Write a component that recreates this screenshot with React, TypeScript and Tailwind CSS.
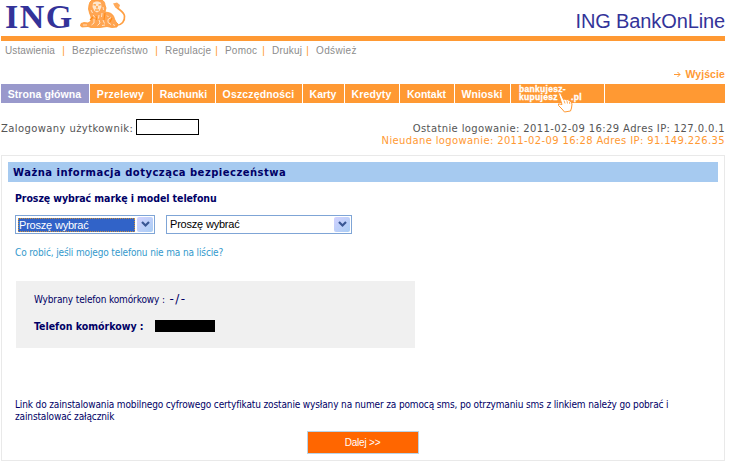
import React from "react";

const topLinks = [
  { label: "Ustawienia", box: "w-[67px] tracking-[0.1px]" },
  { label: "Bezpieczeństwo", box: "w-[93px] tracking-[0.27px]" },
  { label: "Regulacje", box: "w-[60px]" },
  { label: "Pomoc", box: "w-[47px]" },
  { label: "Drukuj", box: "w-[44px]" },
  { label: "Odśwież", box: "w-[50px] tracking-[0.35px]" },
];

const tabs = [
  { label: "Strona główna", box: "w-[88px] bg-[#9999cc] tracking-[0.1px]" },
  { label: "Przelewy", box: "w-[62px] bg-[#ff9933] tracking-[0.3px]" },
  { label: "Rachunki", box: "w-[62px] bg-[#ff9933]" },
  { label: "Oszczędności", box: "w-[86px] bg-[#ff9933] tracking-[0.15px]" },
  { label: "Karty", box: "w-[41px] bg-[#ff9933]" },
  { label: "Kredyty", box: "w-[54px] bg-[#ff9933] tracking-[0.1px]" },
  { label: "Kontakt", box: "w-[54px] bg-[#ff9933]" },
  { label: "Wnioski", box: "w-[55px] bg-[#ff9933] tracking-[0.1px]" },
];

function Lion() {
  return (
    <svg width="48" height="32" viewBox="0 0 48 32" className="block">
      <path
        d="M13 0 L23 0 C25 1 26 3 26 5 L27 8 L26 12 L29 12.500 C33 13 35 16 35.500 19 L37 22 L39 24 L38 27 L33 27.500 L28 26.500 L21 27.500 L12 27.500 L9 26.500 L3 27 L1.500 26 L2 23.500 L5 22.500 L9 23 L12 21 L12 17 L10.500 13 L9.500 9 L10 5 L11 2 Z"
        fill="#ffa552"
        stroke="#ff9933"
        strokeWidth=".8"
      />
      <path d="M14 3 C16 1 20 1 22 3 L22.500 7 L20.500 11 L18 12.500 L15.500 11 L13.500 7 Z" fill="#ffe6cc" />
      <g fill="none" stroke="#ff8a14" strokeWidth="1.1">
        <path d="M14.500 4.800 L17 5 M19.500 5 L21.800 4.800 M18 6 L18 8.500 M16 10 L20 10" />
        <path d="M11 20 L14 17 M17 16 L17.500 20 M26 13 L25 20 M33 18 L31 22" />
      </g>
      <g fill="none" stroke="#ffe9d2" strokeWidth=".9">
        <path d="M12 10 L13.500 13 M24 7 L24.500 10 M14 15 L16 17.500 M20 15 L19.500 18.500 M23 13 L22.500 17" />
        <path d="M15 19 L15 23 L12.500 25 M20 20 L21 23 L18.500 25.500 M24 20 L25.500 23.500 M28 15.500 L29.500 17 M32 17.500 L29 19.500 L29 22.500 L32 24.500 M4 25 L8 25 M23 25.500 L26 25 M34 24.500 L36 25.500" />
      </g>
      <path d="M37 25.500 C43 25 46 21 45.500 16 C45 12 41.500 10.500 39 8.500 C37.500 7.300 36.500 6 36 5" fill="none" stroke="#ff9f42" strokeWidth="1.700" />
      <path d="M34 3.500 L38 2.500 L41 5 L40 8 L36.500 7.500Z" fill="#ffab5c" />
    </svg>
  );
}

function HandCursor() {
  return (
    <svg width="16" height="21" viewBox="0 0 16 21" className="block">
      <path
        d="M1.500 1.500 C2.500 .5 3.500 1 4 2 L6.500 7.500 L8 7 L9.500 8 L11 7.500 L12.500 9 L14 9.500 L15 12 L14.500 16 L13.500 19 L7.500 20 L5 17 L1.500 13.500 L1.500 11.800 L5 12.500 Z"
        fill="#fff"
        stroke="#ff9933"
        strokeWidth="1"
      />
      <path d="M7 8.500 L8 11.500 M10 9 L10.500 11.500 M12.500 10 L12.800 12" stroke="#ff9933" strokeWidth=".8" />
    </svg>
  );
}

function SelectArrow() {
  return (
    <span className="flex h-[15px] w-[16px] shrink-0 items-center justify-center rounded-[2px] bg-linear-to-br from-[#d2d2ff] to-[#a9cdf4]">
      <svg width="9" height="7" viewBox="0 0 9 7">
        <path d="M1 1 L4.500 4.500 L8 1" fill="none" stroke="#3a5794" strokeWidth="2.200" />
      </svg>
    </span>
  );
}

export default function App() {
  return (
    <div className="h-[465px] w-[730px] overflow-hidden bg-white pl-px font-['DejaVu_Sans_Condensed','DejaVu_Sans',sans-serif] whitespace-nowrap">
      <div className="w-[724px]">
        <header className="flex h-9 items-start justify-between">
          <div className="flex">
            <span className="w-[78px] pl-[4px] font-['Liberation_Serif',serif] text-[34px] leading-[34px] font-bold tracking-[1.5px] text-[#333399]">ING</span>
            <Lion />
          </div>
          <span className="pt-[9px] font-['Liberation_Sans',sans-serif] text-[20px] leading-[24px] tracking-[-0.12px] text-[#333399]">ING BankOnLine</span>
        </header>
        <div className="h-[5px] bg-[#ff9933]" />

        <nav className="flex h-[19px] pl-[4px] font-['Liberation_Sans',sans-serif] text-[10px] leading-[19px] tracking-[0.2px] text-[#8c8c8c]">
          {topLinks.map((l, i) => (
            <span key={l.label} className={`${l.box} flex justify-between`}>
              <span>{l.label}</span>
              {i < 5 && <span className="pr-[7px] text-[#ff9933]">|</span>}
            </span>
          ))}
        </nav>

        <div className="flex h-6 items-end justify-end gap-[4px] pb-[2px] font-['Liberation_Sans',sans-serif] text-[10.5px] leading-[16px] font-bold tracking-[0.1px] text-[#ff9933]">
          <svg width="7" height="7" viewBox="0 0 7 7" className="mb-[4px]">
            <path d="M0 3.500 H6 M3.500 1 L6 3.500 L3.500 6" fill="none" stroke="#ff9933" strokeWidth="1" />
          </svg>
          <span>Wyjście</span>
        </div>

        <div className="flex h-[19px] gap-px">
          {tabs.map((t) => (
            <span key={t.label} className={`${t.box} shrink-0 pr-[1px] text-center font-['Liberation_Sans',sans-serif] text-[10.5px] leading-[20px] font-bold text-white`}>
              {t.label}
            </span>
          ))}
          <span className="relative w-[93px] shrink-0 bg-[#ff9933] pt-[1px] pl-[8px] font-['Liberation_Sans',sans-serif] text-[8.5px] leading-[8px] font-bold tracking-[0.3px] text-white [-webkit-text-stroke:0.3px_white]">
            <span className="block">bankujesz-</span>
            <span className="flex">
              <span className="w-[52px]">kupujesz</span>
              <span>.pl</span>
            </span>
            <span className="absolute top-[8px] left-[46px]">
              <HandCursor />
            </span>
          </span>
          <span className="grow bg-[#ff9933]" />
        </div>

        <div className="flex h-[52px] justify-between pt-[16px] font-['DejaVu_Sans',sans-serif] text-[10px] text-[#555]">
          <div className="flex h-4">
            <span className="w-[135px] text-[10px] leading-[19px] tracking-[0.4px]">Zalogowany użytkownik:</span>
            <span className="h-4 w-[63px] border border-black" />
          </div>
          <div className="pt-[4px] text-right leading-[12px]">
            <div className="tracking-[0.38px]">Ostatnie logowanie: 2011-02-09 16:29 Adres IP: 127.0.0.1</div>
            <div className="tracking-[0.36px] text-[#ff9933]">Nieudane logowanie: 2011-02-09 16:28 Adres IP: 91.149.226.35</div>
          </div>
        </div>

        <main className="h-[306px] border border-[#e9e9e9] px-[6px] pt-[6px] text-[10px] tracking-[-0.135px] text-[#000066]">
          <h1 className="h-[20px] bg-[#a6caf0] pl-[5px] font-['DejaVu_Sans',sans-serif] text-[10px] leading-[21px] font-bold tracking-[0.48px]">Ważna informacja dotycząca bezpieczeństwa</h1>
          <div className="pl-[7px]">
            <h2 className="pt-[8px] text-[10.5px] leading-[16px] font-bold tracking-[-0.08px]">Proszę wybrać markę i model telefonu</h2>
            <div className="mt-[9px] flex gap-[11px] font-['Liberation_Sans',sans-serif] text-[11px] tracking-[-0.2px] text-black">
              <div className="flex h-[19px] w-[140px] items-center justify-between border border-[#7fa5d6] pr-[1px] pl-[2px]">
                <span className="h-[14px] w-[117px] border border-dotted border-[#c89040] bg-[#3163c8] leading-[13px] text-white">Proszę wybrać</span>
                <SelectArrow />
              </div>
              <div className="flex h-[19px] w-[186px] items-center justify-between border border-[#7fa5d6] pr-[1px] pl-[3px]">
                <span className="leading-[17px]">Proszę wybrać</span>
                <SelectArrow />
              </div>
            </div>
            <p className="mt-[11px] leading-[16px] text-[#3399cc]">Co robić, jeśli mojego telefonu nie ma na liście?</p>
            <section className="mt-[20px] ml-px h-[67px] w-[399px] bg-[#f0f0f0] pt-[11px] pl-[18px]">
              <p className="h-[16px] leading-[16px]">
                Wybrany telefon komórkowy : <span className="ml-[2px] font-['DejaVu_Sans',sans-serif] text-[12px] leading-[14px] tracking-[1.5px]">-/-</span>
              </p>
              <div className="mt-[10px] flex">
                <span className="w-[121px] text-[10.5px] leading-[16px] font-bold tracking-[0px]">Telefon komórkowy :</span>
                <span className="mt-[2px] h-[12px] w-[60px] bg-black" />
              </div>
            </section>
            <p className="mt-[51px] leading-[12px]">
              Link do zainstalowania mobilnego cyfrowego certyfikatu zostanie wysłany na numer za pomocą sms, po otrzymaniu sms z linkiem należy go pobrać i
              <br />
              zainstalować załącznik
            </p>
          </div>
          <button className="mt-[8px] ml-[299px] block h-[23px] w-[112px] border border-[#b9d3e6] bg-[#ff6600] pr-[1px] text-center font-['Liberation_Sans',sans-serif] text-[10px] tracking-[-0.2px] text-white">Dalej &gt;&gt;</button>
        </main>
      </div>
    </div>
  );
}
